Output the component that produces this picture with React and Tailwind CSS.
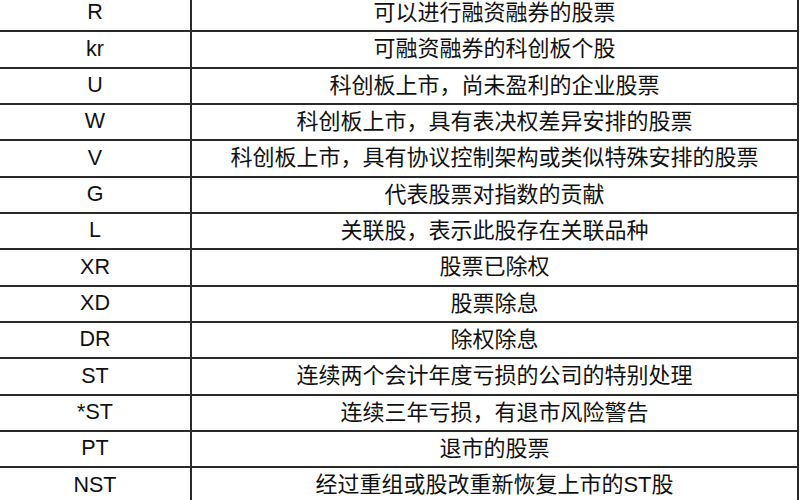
import React from "react";

const rows = [
  ["R", "可以进行融资融券的股票"],
  ["kr", "可融资融券的科创板个股"],
  ["U", "科创板上市，尚未盈利的企业股票"],
  ["W", "科创板上市，具有表决权差异安排的股票"],
  ["V", "科创板上市，具有协议控制架构或类似特殊安排的股票"],
  ["G", "代表股票对指数的贡献"],
  ["L", "关联股，表示此股存在关联品种"],
  ["XR", "股票已除权"],
  ["XD", "股票除息"],
  ["DR", "除权除息"],
  ["ST", "连续两个会计年度亏损的公司的特别处理"],
  ["*ST", "连续三年亏损，有退市风险警告"],
  ["PT", "退市的股票"],
  ["NST", "经过重组或股改重新恢复上市的ST股"],
];

export default function App() {
  return (
    <div className="w-[800px] h-[500px] overflow-hidden bg-white">
      <div
        className="-mt-[4px] w-[799px] text-[#111111]"
        style={{ fontFamily: '"Liberation Sans", "Noto Sans CJK SC", sans-serif' }}
      >
        {rows.map(([code, desc]) => (
          <div key={code} className="flex h-[36.33px] border-b-2 border-[#2a2a2a]">
            <div className="w-[192px] shrink-0 border-r-2 border-[#2a2a2a] flex items-center justify-center leading-none text-[21.5px]">
              {code}
            </div>
            <div className="flex-1 border-r-2 border-[#2a2a2a] flex items-center justify-center leading-none text-[22px]">
              {desc}
            </div>
          </div>
        ))}
      </div>
    </div>
  );
}
